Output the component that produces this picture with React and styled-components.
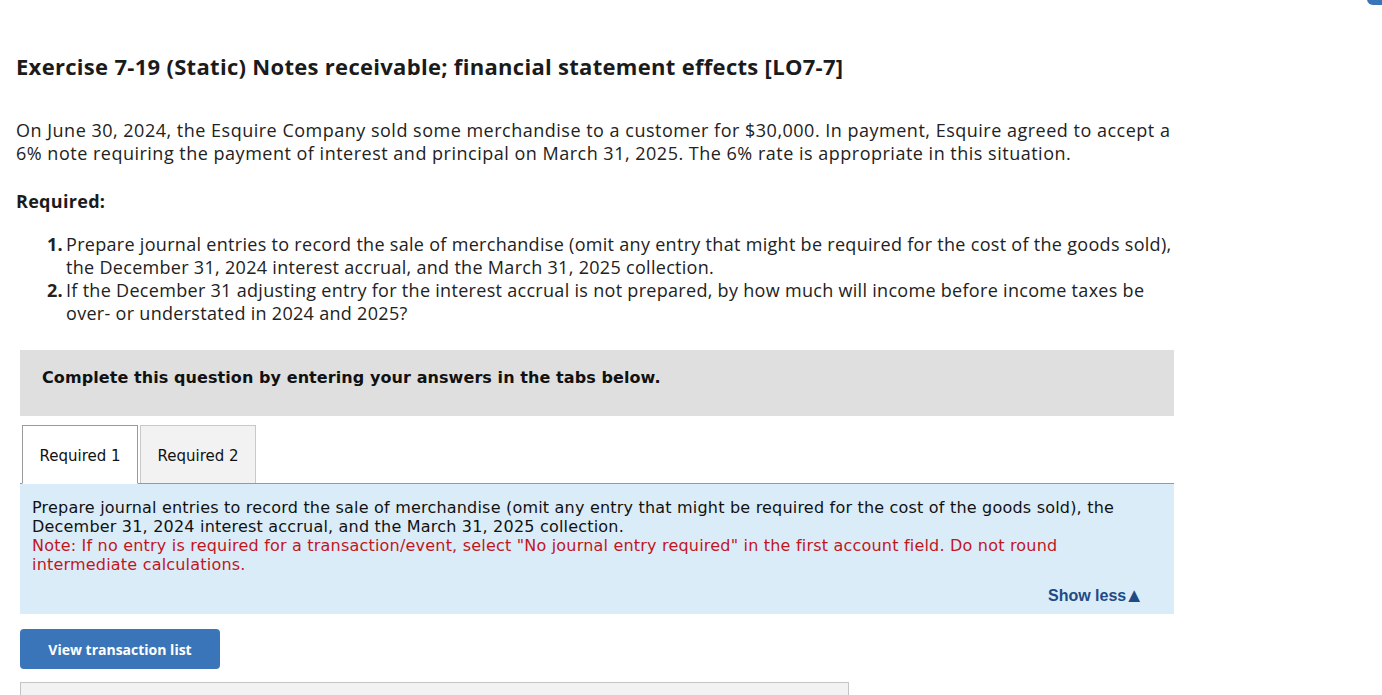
import React from "react";
import styled, { createGlobalStyle } from "styled-components";

const Global = createGlobalStyle`
  html, body { margin: 0; padding: 0; background: #fff; overflow: hidden; }
  body { font-family: "Open Sans", Lato, sans-serif; color: #222; }
`;

const Page = styled.div`
  position: relative;
  padding: 0 206px 0 16px;
  width: 1160px;
  height: 695px;
  overflow: hidden;
`;

const CornerTab = styled.div`
  position: absolute;
  top: -10px;
  right: 0;
  width: 15px;
  height: 15px;
  background: #3a75b9;
  border-radius: 0 0 0 6px;
`;

const Title = styled.h1`
  margin: 0;
  padding-top: 51px;
  font-size: 22px;
  line-height: 30px;
  font-weight: 700;
  letter-spacing: 0.3px;
  color: #1b1b1b;
`;

const Para = styled.p`
  margin: 38px 0 0;
  font-size: 18px;
  line-height: 23px;
  letter-spacing: 0.5px;
  color: #222;
`;

const ReqHead = styled.h2`
  margin: 25px 0 0;
  font-size: 18px;
  line-height: 23px;
  font-weight: 700;
  letter-spacing: 0.3px;
  color: #1b1b1b;
`;

const List = styled.ol`
  margin: 20px 0 0;
  padding: 0 0 0 50px;
  list-style: none;
  counter-reset: item;
`;

const Item = styled.li`
  position: relative;
  font-size: 18px;
  line-height: 23px;
  letter-spacing: 0.3px;
  color: #222;
  counter-increment: item;
  &::before {
    content: counter(item) ".";
    position: absolute;
    right: 100%;
    margin-right: 3px;
    font-weight: 700;
  }
`;

const Prompt = styled.div`
  margin: 25px 0 0 4px;
  width: 1154px;
  height: 66px;
  background: #dfdfdf;
  box-sizing: border-box;
  padding: 0 22px 12px;
  display: flex;
  align-items: center;
  font-family: "DejaVu Sans", Verdana, sans-serif;
  font-weight: 700;
  font-size: 16px;
  letter-spacing: 0.08px;
  color: #111;
`;

const Tabs = styled.div`
  margin: 9px 0 0 6px;
  display: flex;
  gap: 2px;
  position: relative;
  z-index: 1;
`;

const Tab = styled.div`
  width: 116px;
  box-sizing: border-box;
  display: flex;
  align-items: center;
  justify-content: center;
  padding-top: 2px;
  font-family: "DejaVu Sans", Verdana, sans-serif;
  font-size: 15px;
  color: #111;
  background: ${(p) => (p.$active ? "#fff" : "#f2f2f2")};
  border: 1px solid ${(p) => (p.$active ? "#9a9a9a" : "#c8c8c8")};
  border-bottom: ${(p) => (p.$active ? "1px solid #fff" : "none")};
  height: ${(p) => (p.$active ? "59px" : "58px")};
`;

const Panel = styled.div`
  margin: -1px 0 0 4px;
  width: 1154px;
  box-sizing: border-box;
  background: #dbecf9;
  border-top: 1px solid #999;
  padding: 14px 12px 9px 12px;
  font-family: "DejaVu Sans", Verdana, sans-serif;
  font-size: 16px;
  line-height: 19px;
  letter-spacing: 0.2px;
  color: #111;
`;

const Note = styled.div`
  color: #c0161d;
`;

const ShowLess = styled.div`
  margin-top: 12px;
  padding-right: 18px;
  display: flex;
  justify-content: flex-end;
  align-items: center;
  font-family: "Liberation Sans", Arial, sans-serif;
  font-weight: 700;
  font-size: 16px;
  letter-spacing: 0;
  color: #1f4a85;
`;

const Arrow = styled.span`
  font-size: 20px;
  line-height: 19px;
  margin-left: -2px;
`;

const Button = styled.button`
  display: block;
  margin: 15px 0 0 4px;
  width: 200px;
  height: 40px;
  border: none;
  border-radius: 4px;
  background: #3a75b9;
  color: #fff;
  font-family: "Open Sans", Lato, sans-serif;
  font-weight: 700;
  font-size: 14px;
  cursor: pointer;
`;

const Bottom = styled.div`
  margin: 13px 0 0 4px;
  width: 829px;
  height: 40px;
  box-sizing: border-box;
  background: #f2f2f2;
  border: 1px solid #c4c4c4;
`;

export default function App() {
  return (
    <>
      <Global />
      <Page>
        <CornerTab />
        <Title>Exercise 7-19 (Static) Notes receivable; financial statement effects [LO7-7]</Title>
        <Para>
          On June 30, 2024, the Esquire Company sold some merchandise to a customer for $30,000. In payment, Esquire agreed to accept a
          6% note requiring the payment of interest and principal on March 31, 2025. The 6% rate is appropriate in this situation.
        </Para>
        <ReqHead>Required:</ReqHead>
        <List>
          <Item>
            Prepare journal entries to record the sale of merchandise (omit any entry that might be required for the cost of the goods sold),
            the December 31, 2024 interest accrual, and the March 31, 2025 collection.
          </Item>
          <Item>
            If the December 31 adjusting entry for the interest accrual is not prepared, by how much will income before income taxes be
            over- or understated in 2024 and 2025?
          </Item>
        </List>
        <Prompt>Complete this question by entering your answers in the tabs below.</Prompt>
        <Tabs>
          <Tab $active>Required 1</Tab>
          <Tab>Required 2</Tab>
        </Tabs>
        <Panel>
          <div>
            Prepare journal entries to record the sale of merchandise (omit any entry that might be required for the cost of the goods sold), the
            December 31, 2024 interest accrual, and the March 31, 2025 collection.
          </div>
          <Note>
            Note: If no entry is required for a transaction/event, select "No journal entry required" in the first account field. Do not round
            intermediate calculations.
          </Note>
          <ShowLess>
            Show less<Arrow>▲</Arrow>
          </ShowLess>
        </Panel>
        <Button>View transaction list</Button>
        <Bottom />
      </Page>
    </>
  );
}
